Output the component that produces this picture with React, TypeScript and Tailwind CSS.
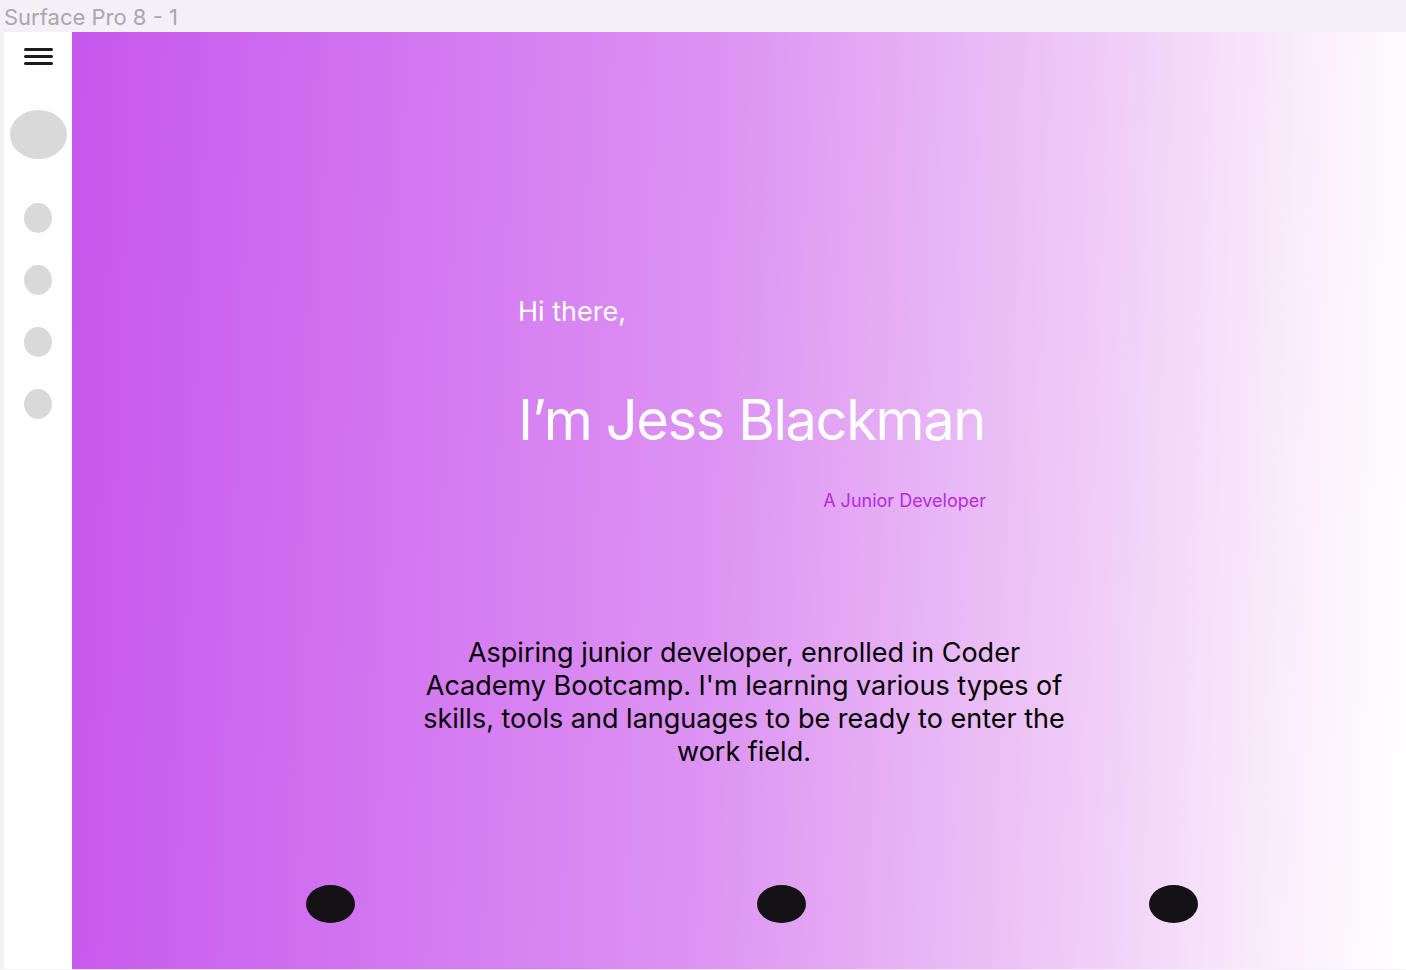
const SIDE_DOTS = [0, 1, 2, 3];

function Hamburger() {
  return (
    <div className="mt-[16px] flex w-[29px] flex-col gap-[4px]">
      <div className="h-[3px] w-full rounded-sm bg-[#1c1c1c]" />
      <div className="h-[3px] w-full rounded-sm bg-[#1c1c1c]" />
      <div className="h-[3px] w-full rounded-sm bg-[#1c1c1c]" />
    </div>
  );
}

function Sidebar() {
  return (
    <aside className="flex w-[68px] shrink-0 flex-col items-center bg-white">
      <Hamburger />
      <div className="mt-[45px] h-[49px] w-[57px] rounded-[50%] bg-[#d9d9d9]" />
      <div className="mt-[44px] flex flex-col gap-[32px]">
        {SIDE_DOTS.map((i) => (
          <div key={i} className="h-[30px] w-[28px] rounded-[50%] bg-[#d9d9d9]" />
        ))}
      </div>
    </aside>
  );
}

export default function App() {
  return (
    <div className="flex h-[970px] w-[1406px] flex-col overflow-hidden bg-[#f3f1f7] font-['Inter','Noto_Sans',sans-serif]">
      <div className="h-8 shrink-0 pl-1 pt-[2px] text-[22px] leading-[30px] text-[#aaa7ae]">
        Surface Pro 8 - 1
      </div>

      <div className="ml-1 flex h-[937px]">
        <Sidebar />

        <main className="flex flex-1 flex-col bg-[linear-gradient(92deg,#c757ee_0%,#dd93f3_48%,#f0cff7_77%,#fbf1fc_92%,#ffffff_100%)]">
          <div className="ml-[446px] mt-[264px] flex w-[468px] flex-col">
            <p className="text-[27px] leading-[32px] text-white">Hi there,</p>
            <h1 className="mt-[58px] whitespace-nowrap text-[56px] leading-[68px] tracking-tight text-white">
              I’m Jess Blackman
            </h1>
            <p className="mt-[35px] text-right text-[18px] leading-[24px] text-[#b42be0]">
              A Junior Developer
            </p>
          </div>

          <p className="ml-[332px] mt-[123px] w-[680px] text-center text-[27px] leading-[33px] text-black">
            Aspiring junior developer, enrolled in Coder
            <br />
            Academy Bootcamp. I'm learning various types of
            <br />
            skills, tools and languages to be ready to enter the
            <br />
            work field.
          </p>

          <div className="mt-[117px] flex">
            <div className="ml-[234px] h-[38px] w-[49px] rounded-[50%] bg-[#141214]" />
            <div className="ml-[402px] h-[38px] w-[49px] rounded-[50%] bg-[#141214]" />
            <div className="ml-[343px] h-[38px] w-[49px] rounded-[50%] bg-[#141214]" />
          </div>
        </main>
      </div>
    </div>
  );
}
